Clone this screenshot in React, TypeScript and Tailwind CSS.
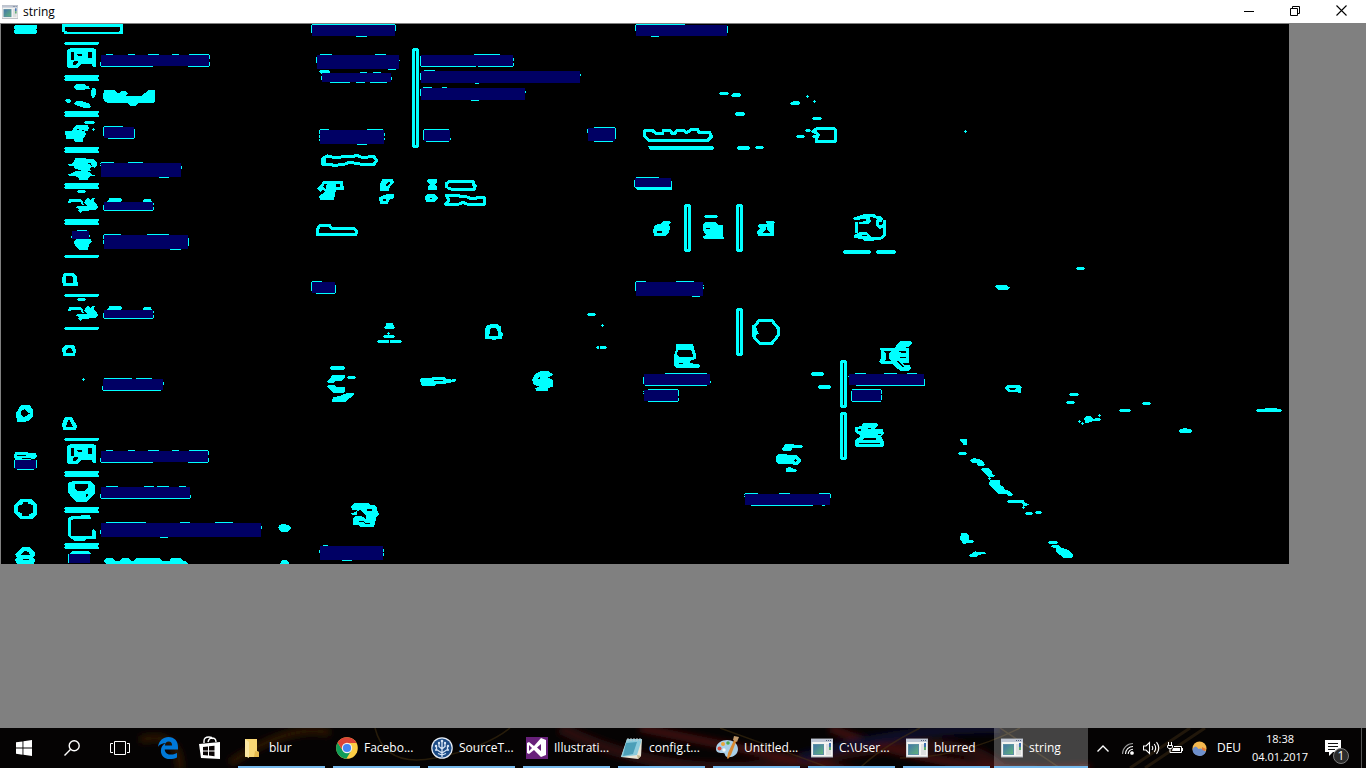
import React from "react";

const CYAN = "#00ffff";
const NAVY = "#000064";

type Span = [number, number];
interface Region {
  at: [number, number, number, number];
  t?: Span[];
  b?: Span[];
  l?: Span[];
  r?: Span[];
}

const regions: Region[] = [
  { at: [101, 55, 108, 11], t: [[106, 113], [128, 135], [148, 159], [172, 179], [189, 209]], b: [[101, 153], [188, 209]], l: [[62, 66]], r: [[55, 59], [62, 66]] },
  { at: [104, 127, 30, 11], t: [[104, 123]], b: [[108, 134]], l: [[127, 136]], r: [[129, 138]] },
  { at: [101, 163, 80, 14], t: [[101, 114], [128, 143]], b: [[159, 169]], l: [[163, 164], [165, 166]], r: [[166, 169]] },
  { at: [104, 202, 49, 8], b: [[104, 153]], l: [[205, 210]], r: [[203, 205], [207, 210]] },
  { at: [104, 235, 84, 14], t: [[104, 121], [147, 169]], b: [[170, 181]], l: [[235, 239], [240, 244]], r: [[238, 246]] },
  { at: [72, 231, 17, 8], t: [[77, 87]], l: [[236, 238]], r: [[235, 237]] },
  { at: [104, 310, 49, 8], b: [[104, 153]], l: [[313, 318]], r: [[311, 313], [315, 318]] },
  { at: [103, 379, 60, 11], t: [[104, 132], [136, 152]], b: [[103, 161]], l: [[386, 390]], r: [[382, 385]] },
  { at: [15, 460, 21, 9], b: [[17, 34]], l: [[460, 468]], r: [[460, 468]] },
  { at: [101, 451, 107, 11], t: [[106, 113], [128, 135], [148, 159], [172, 179], [189, 208]], b: [[101, 153], [188, 208]], l: [[458, 462]], r: [[451, 455], [458, 462]] },
  { at: [101, 487, 89, 11], t: [[106, 118], [144, 154], [157, 169], [179, 186]], b: [[101, 190]], l: [[494, 498]], r: [[495, 498]] },
  { at: [101, 523, 160, 14], t: [[106, 146], [180, 190], [215, 233]], b: [[160, 168]], l: [[530, 534]], r: [[526, 529]] },
  { at: [69, 554, 21, 9], l: [[554, 563]] },
  { at: [312, 25, 83, 11], t: [[312, 395]], b: [[356, 367]], l: [[25, 33]], r: [[25, 31]] },
  { at: [317, 55, 82, 14], t: [[320, 332], [375, 386]], b: [[388, 396]], l: [[57, 63]], r: [[60, 61]] },
  { at: [322, 73, 69, 9], t: [[360, 367], [373, 381]], b: [[330, 350], [356, 365], [370, 387]], l: [[76, 80]], r: [[77, 80]] },
  { at: [421, 55, 92, 11], t: [[474, 500]], b: [[421, 476], [478, 513]], l: [[56, 66]], r: [[58, 61], [63, 66]] },
  { at: [421, 71, 159, 12], t: [[424, 435]], b: [[475, 479]], l: [[73, 80]], r: [[74, 76]] },
  { at: [421, 88, 104, 12], t: [[423, 432], [442, 447]], b: [[471, 479]], l: [[89, 96]], r: [[91, 93]] },
  { at: [320, 130, 64, 14], t: [[320, 329], [367, 383]], b: [[357, 367]], l: [[130, 134], [135, 138], [139, 141]], r: [[133, 136], [138, 140]] },
  { at: [424, 130, 26, 11], t: [[424, 449]], b: [[426, 449]], l: [[130, 140]], r: [[138, 140]] },
  { at: [588, 128, 27, 13], t: [[594, 615]], b: [[594, 613]], l: [[129, 133]], r: [[128, 139]] },
  { at: [636, 25, 91, 11], t: [[636, 685]], b: [[651, 659]], l: [[25, 31]], r: [[26, 33]] },
  { at: [635, 178, 36, 9], t: [[636, 659]], l: [[180, 187]], r: [[181, 187]] },
  { at: [312, 282, 23, 11], t: [[312, 322]], b: [[316, 335]], l: [[282, 291]], r: [[285, 293]] },
  { at: [320, 546, 63, 14], t: [[323, 328]], b: [[342, 352]], l: [[550, 553]], r: [[549, 552], [553, 556]] },
  { at: [636, 282, 67, 14], t: [[636, 646], [676, 694]], b: [[692, 700]], l: [[282, 291]], r: [[285, 286], [287, 289]] },
  { at: [644, 374, 66, 11], t: [[665, 707]], b: [[645, 707]], l: [[377, 384]], r: [[381, 383]] },
  { at: [644, 390, 34, 11], t: [[648, 678]], b: [[648, 678]], l: [[391, 392], [393, 394]], r: [[390, 396], [398, 401]] },
  { at: [849, 374, 75, 11], t: [[855, 866], [884, 897], [907, 917]], b: [[856, 925]], l: [[376, 377]], r: [[379, 385]] },
  { at: [852, 390, 29, 11], t: [[852, 881]], b: [[852, 881]], l: [[391, 401]], r: [[390, 394], [395, 400]] },
  { at: [745, 494, 85, 11], t: [[745, 758], [779, 790], [819, 830]], b: [[751, 813], [822, 825]], l: [[494, 495], [496, 497]], r: [[494, 498]] },
];

function TextRegion({ at: [x, y, w, h], t = [], b = [], l = [], r = [] }: Region) {
  const row = (s: Span[], yy: number) => s.map(([a, z]) => `M${a} ${yy}H${z}v1H${a}z`).join("");
  const col = (s: Span[], xx: number) => s.map(([a, z]) => `M${xx} ${a}V${z}h1V${a}z`).join("");
  return (
    <>
      <rect x={x} y={y} width={w} height={h} fill={NAVY} />
      <path d={row(t, y - 1) + row(b, y + h) + col(l, x - 1) + col(r, x + w)} />
    </>
  );
}

const dash = (x1: number, y1: number, x2: number, y2: number) => {
  const m = Math.round((y1 + y2) / 2);
  return `M${x1 + 3} ${y1}H${x2 - 3}L${x2} ${m}L${x2 - 3} ${y2}H${x1 + 3}L${x1} ${m}z`;
};
const dot = (x: number, y: number) => `M${x - 4} ${y - 1}h9v3h-9zM${x - 1} ${y - 4}h3v3h-3zM${x - 1} ${y + 2}h3v3h-3z`;
const rail = (x: number, y: number, h: number) =>
  `M${x + 1} ${y}h5l1 2v${h - 4}l-1 2h-5l-1 -2v${4 - h}zM${x + 3} ${y + 3}v${h - 6}h1v${6 - h}z`;

const gate =
  "M204 147L213 144H276L287 147V201H278L276 192H243L234 203H204L201 200V150zM213 156V180H222V156zM231 162L234 168H246V162zM264 156V174H276V156zM219 186V194H228L234 189V183H225z";
const bird =
  "M234 0H255L258 4L255 9H234L231 4zM207 27H243L249 36L252 45H246L243 36H214L210 41L204 38zM258 27L264 24L273 33L276 24H284L282 33L288 40L294 52L288 60H270L264 63H246L240 69L234 63L237 57L228 52L231 48H264L252 39zM327 24H363L366 30L363 36H318L327 30zM432 27H453L456 36H429z";

interface Patch {
  x: number;
  y: number;
  fill: string;
  line?: string;
}

// Contours are traced on a grid three times finer than the bitmap.
const patches: Patch[] = [
  {
    x: 0, y: 0,
    fill:
      "M45 75H108L111 78V84L108 88L111 92V98L108 102H45L42 98V92L45 88L42 84V78z" +
      "M186 72H369V99L366 102H192V96L186 95zM195 81V92L201 95H357L360 92V81z" + gate +
      "M228 252H255L258 258H266L270 267H258L252 270H228L222 262z" +
      "M279 263H285L288 270V282L282 293H276L273 285V273z" +
      "M198 297H210L213 302L210 308H200L195 302z" +
      "M228 303H246L270 312L273 321L264 324H252L228 315L222 310z" +
      "M312 270H345L351 279H357L363 273H378L384 280L378 287H426L432 279H438L444 270H465V303L459 309H414L408 318H390L384 309H324L312 303L309 290z" +
      dash(252, 363, 285, 372) +
      "M219 387L228 375H264L267 384L264 393L252 395L258 402L255 408L249 414L250 426H225L222 417H198L195 393H213zM232 386V389H238V386zM246 390V394H252V390z" + dot(279, 388) +
      "M225 474L255 473L258 478H282L291 487V495L284 503L276 500L270 504L273 513L255 516H270L273 522L276 525H284V528H273L264 534V541H240L232 531L222 528H207L204 521H213L228 513H246L225 506L219 497H207L204 491H216L222 486zM260 487L270 494L276 499L272 490z",
  },
  { x: 0, y: 190, fill: bird },
  { x: 0, y: 298, fill: bird },
  {
    x: 0, y: 190,
    fill:
      "M228 147H273L276 156L270 159L264 174L263 180H237L225 168L222 156z" +
      "M192 249H219L231 261L234 288H189L186 267L190 255zM198 258V279H219V264L213 258z" +
      "M195 465H222L228 480L225 498H189L186 474zM198 489H218V483L213 474H204L198 480z" + dot(250, 568),
  },
  { x: 0, y: 396, fill: gate },
  {
    x: 0, y: 370,
    fill:
      "M63 105H90L99 120V138L90 150L72 156H51L48 130zM63 123V132L69 141L78 138L90 130L81 126L75 117z" +
      "M195 141H216L231 168L228 180H189L186 162zM204 150L198 171H219L210 152z" +
      "M45 246H81L84 249H108L111 260L105 267H93V270H45L42 256zM51 255V258H78V255zM66 264V267H93V264z" +
      "M60 387H93L111 405V432L96 447H60L42 426V405zM69 396V402L54 408V426L66 429V438H87V432L100 429V405L84 402V396z" +
      "M66 531H87L105 549V558L100 563L105 570L102 582H51L45 570L51 563L45 552L57 540zM72 543L63 552V555H90L87 546zM69 567V570H87V567z" +
      "M219 333H270L285 345V372L276 378L270 387L258 396H231L219 387L204 366V339zM225 342V357L234 363H252L264 354V342zM258 372V382H261L264 375V372z" +
      "M216 438L270 435L273 447H222L213 450V498H276V480L282 477L288 486V507H258L252 513H222L216 507L204 498V444z" +
      "M219 543H267L273 552L207 553z" +
      "M840 464L852 462L870 468L873 474L864 486H843L834 472z" +
      "M846 570H861L867 579V582H840z" +
      "M312 573L318 564H339L345 573H360L366 564H387L393 573H402L408 564H480L486 573H508L513 564H543L549 573H558L564 582H318z",
  },
  {
    x: 300, y: 20,
    fill:
      "M60 150H87L90 156L87 159H72L63 161L57 156zM63 414H78V434H63z" +
      "M69 484H129L132 510H108L102 540H60L57 528L75 516L72 508L60 516L51 504L63 495zM72 493L69 501L78 510V500L80 492zM108 493V502H120V493z" +
      "M249 476H278L282 486L270 498L267 512H240V490zM262 488L256 496L260 500L270 490V484z" +
      "M264 522H282V534L268 540L264 551H240L237 532L250 526zM249 536V543H258V536z" +
      "M384 477H411V486L405 494L411 500V509H384V500L390 494L381 486z" +
      "M381 522H402L414 534L405 545H378L375 532zM390 533V537H397V533z",
    line:
      "M66 432L70 414L82 408L100 412H120L135 408H150L158 410L170 405L185 412L222 410L230 422L222 433H186L165 430L150 426L135 432L120 434L105 437L90 433H66" +
      "M441 503L440 490L450 483H519L520 494L526 498L522 508H456L441 503" +
      "M438 525H474L482 530L498 530L514 536L530 534L552 531V545L555 552H500L489 547L474 553H437L447 540z" +
      "M52 628V643H168V630L162 626H96L88 616H60z",
  },
  {
    x: 300, y: 270,
    fill:
      "M258 159H279L281 165L285 174L279 177H255L252 171L258 168z" + dot(265, 190) + dash(249, 195, 285, 204) + dash(231, 210, 270, 219) + dash(268, 210, 306, 219) +
      "M573 162H591L603 170V183L609 190L606 207H588L585 210H576L573 207H555V180L558 168zM576 174L570 177V189L567 198H594V186L588 174z" +
      dash(861, 129, 888, 138) + dot(893, 232) + dash(90, 288, 135, 300) +
      "M96 315H135V324L126 332L108 333L99 339H84L81 333L93 324z" + dash(141, 318, 168, 327) +
      "M84 345H105L108 351H135V366L129 369H99L93 360L81 349z" +
      "M99 381L120 378L141 369H162V375L150 384L135 396H96z" +
      "M363 324H396V321H435L438 326L450 327L456 330L459 326H465L468 331L462 336H456L450 340L408 342L405 348H366L360 331zM402 330V333H429V330z" +
      "M723 303H747L750 308L759 312L756 318L744 322L758 329V342L760 350L744 354V362H708L705 354L720 350L702 345L696 329L705 312zM714 324V327H720V321z" +
      "M162 699H204L213 705H222L231 712L230 720L237 732L228 744L225 760L222 771H180L174 765H159V744L168 738H183L168 734H156L153 729L168 726L171 720H156L153 708zM171 723V735L189 741L198 747V735L189 729L183 720zM201 717V723H216V717zM177 753V756H189L195 762H210V759H195L189 753z",
  },
  {
    x: 580, y: 20,
    fill:
      dash(417, 216, 447, 225) + "M459 219H480L483 225L480 231H456L453 225z" + dash(465, 276, 495, 288) +
      "M642 243H657L660 249L657 255H633L630 249z" + dot(682, 229) + dot(703, 244) + dash(696, 291, 726, 300) + dash(648, 345, 675, 354) +
      "M204 378H399L402 384L399 390H210z" + dash(471, 378, 510, 390) + dash(525, 378, 552, 387) +
      dash(675, 327, 693, 336) + "M693 333L704 324V338H697zM696 350L703 344H717V354H699z" + "M165 501H276V507L273 510H171z" +
      "M249 603H270L273 607L267 613L270 625L267 637L255 648H222L219 630L225 615L245 610zM231 633V639H246V633z" +
      dash(372, 585, 414, 594) +
      "M375 606H408L414 615H429V650H432V656H372L369 650L378 644L369 632V612zM378 624V627H390V624z" +
      "M558 603H582L585 608L581 614L582 624V648H534L531 636L540 626L532 618L540 612H560zM549 639H570V636L561 630V622H558V630L549 636z" +
      "M819 594L845 585L858 581H882L888 588H900L909 597L906 606H894L888 594L870 591L873 606L864 612H837V606L858 603V597L822 600z" +
      "M822 645L840 636H861L873 651H885V660L876 663H855L846 657L822 654zM846 645V648H861V645z" +
      dash(789, 690, 873, 702) + dash(888, 690, 948, 702) + dot(1155, 334),
    line:
      "M194 348V332H218L228 341H248L250 331H270L276 340H285L290 332H312L320 338L335 328H352L358 338H390V346L396 348L383 361H206z" +
      "M704 331L712 325H762L766 329V364H708V356L715 345L704 335" +
      "M830 606V640M894 600L892 614L900 622L912 616V648L903 654H884M912 600V618",
  },
  {
    x: 580, y: 260,
    fill:
      "M516 198H528L531 210L537 220L528 226V234H519L516 224z" +
      "M288 252H339L342 264L348 285V297L333 300L330 309L345 312H357L360 318L354 324H288L282 315V288L288 270zM294 270L291 282L297 291H339V285L333 270zM294 309L299 313H309V309z" +
      dash(21, 159, 48, 168) + dot(67, 196) + dash(48, 258, 60, 267) + dash(57, 258, 81, 267) + dash(693, 336, 732, 348) + dash(714, 375, 753, 387) +
      "M960 243H990L996 249L990 258L975 264H987V309H966L975 315H990L993 324L987 333H963L945 321L938 312H906L897 306L903 294V276L900 264H942L948 258zM912 273L918 282V297L912 303H936L927 297V279L936 273zM957 273V276L966 279H978V273zM960 291V294H978V291zM948 302L957 312L966 321L972 320L960 309L954 302z" +
      "M849 489H891L894 495L885 507H909L912 522L904 530L912 546V558L906 561H828L825 555V540L843 528L825 516V501L846 498zM834 507V513H843V507zM864 504V507H873V504zM837 549V552H900V549zM852 534L846 540H888V534zM894 522V526H903V522z" +
      "M615 552H640L645 556H666L669 560L663 564H636V570L630 573H609L603 567L612 561z" +
      "M594 582H621L624 586H651L663 597V606L651 615H639L636 611H594L588 603V588zM642 600L646 608L651 603L648 597z" +
      "M618 624L630 621L651 630L645 636H618z",
    line: "M536 182H576L584 192L595 205V225L584 240L575 250H540L532 242L522 232L520 200L530 192z",
  },
  {
    x: 930, y: 240,
    fill:
      dash(438, 81, 465, 90) +
      "M198 135H228L231 138L240 142L234 150H204L195 138z" +
      "M234 435H267L276 441L273 450V459H267L261 457H237L222 444zM237 444V447L243 450H252L258 447V444z" +
      dash(417, 459, 447, 468) + dash(408, 483, 435, 492) + dash(567, 507, 603, 516) + dash(636, 486, 663, 495) +
      "M978 511L981 507H1005V504H1041V507H1053L1056 511L1053 516H981z" +
      "M750 567H759V564H771V567H783L786 573L783 579H750L747 573z" +
      "M469 528H480L489 536L510 534L512 538L508 543H489L474 549H465L463 535z" + dot(508, 526) + dot(449, 544) + dot(457, 550) +
      "M87 600L90 597H111V616H102L96 608z" + dash(84, 636, 111, 645) +
      "M120 660L132 654L156 660L165 674L159 678H144L141 669H126z" +
      "M153 687L158 684H174L186 693V702L195 706L189 711H174z" + dot(178, 715) +
      "M180 720H210V735L222 741V748L240 753L250 764L240 770L228 762H207L177 735z" +
      "M231 784L234 780H282L285 789L297 793L291 797H279L276 789H234z" + dot(279, 802) + dash(285, 816, 309, 825) + dash(315, 813, 336, 822) +
      "M93 879H108L117 888V900H129L132 905L126 909H114L100 912L90 897z" +
      "M135 934L147 936H165L168 941L144 945L138 951H120L117 946z" + dash(354, 903, 384, 912) +
      "M363 918L366 915H387L390 921L414 930L431 945L426 954H402L378 936V924L366 922z",
  },
];

const thinBars = [42, 255, 294, 327, 438];
const thickBars = [75, 111, 147, 183, 219, 471, 507, 543];
const rails: [number, number, number][] = [[412, 48, 100], [684, 204, 48], [736, 204, 48], [736, 308, 48], [840, 360, 48], [840, 412, 48]];

function EdgeMap() {
  return (
    <svg width="1288" height="540" viewBox="1 24 1288 540" shapeRendering="crispEdges" fill={CYAN} fillRule="evenodd" className="block shrink-0 bg-black" role="img" aria-label="Detected regions">
      {thinBars.map((y) => (
        <path key={y} d={`M65 ${y}h33l1 1-1 2H65l-1-2z`} />
      ))}
      {thickBars.map((y) => (
        <path key={y} d={`M65 ${y}h33l1 1-1 2 1 2-1 1H65l-1-1 1-2-1-2z`} />
      ))}
      <path d={rails.map((r) => rail(...r)).join("")} />
      {patches.map((p, i) => (
        <g key={i} transform={`translate(${p.x} ${p.y}) scale(${1 / 3})`}>
          <path d={p.fill} />
          {p.line && <path d={p.line} fill="none" stroke={CYAN} strokeWidth="9" strokeLinejoin="round" />}
        </g>
      ))}
      {regions.map((r, i) => (
        <TextRegion key={i} {...r} />
      ))}
    </svg>
  );
}

function WindowIcon({ size }: { size: number }) {
  return (
    <svg width={size} height={size} viewBox="0 0 22 22" className="shrink-0">
      <rect x="0" y="2" width="22" height="18" fill="#f4f4f2" stroke="#a9adb5" strokeWidth="1" />
      <path d="M0 2h22v3H0z" fill="#bfc6d4" />
      <path d="M15 3h1v1h-1zM17 3h1v1h-1zM19 3h1v1h-1z" fill="#51617c" />
      <rect x="2" y="7" width="11" height="11" fill="#5b8fa3" />
      <path d="M3 8h9v9H3z" fill="url(#wi)" />
      <path d="M15 7h5v11h-5z" fill="#dcdedf" />
      <path d="M18 6h2v4h-2z" fill="#3c6fb0" />
      <path d="M18 10h2v3h-2z" fill="#58ab6d" />
      <defs>
        <linearGradient id="wi" x1="0" y1="0" x2="1" y2="1">
          <stop offset="0" stopColor="#4577a8" />
          <stop offset="1" stopColor="#5fb27b" />
        </linearGradient>
      </defs>
    </svg>
  );
}

const FolderIcon = () => (
  <svg width="22" height="22" viewBox="0 0 22 22" className="shrink-0">
    <path d="M4 2h12v12l2 1v5H4z" fill="#f8d775" />
    <path d="M4 2l4 3v16l-4-2z" fill="#fbe7a4" />
    <path d="M14 14l4 1v5h-5z" fill="#e5b94e" />
  </svg>
);

const ChromeIcon = () => (
  <svg width="22" height="22" viewBox="0 0 22 22" className="shrink-0">
    <circle cx="11" cy="11" r="10.8" fill="#fccd44" />
    <path d="M11 11L1.6 5.6A10.8 10.8 0 0 1 20.5 6H11z" fill="#db4437" />
    <path d="M1.6 5.6A10.8 10.8 0 0 0 10.3 21.8L15.3 13.5 6.7 13.5z" fill="#0f9d58" />
    <path d="M1.6 5.6L6.7 13.5 11 11 11 6z" fill="#db4437" />
    <circle cx="11" cy="11" r="5.2" fill="#f1f1f1" />
    <circle cx="11" cy="11" r="4.1" fill="#4285f4" />
  </svg>
);

const SourceTreeIcon = () => (
  <svg width="22" height="22" viewBox="0 0 22 22" className="shrink-0">
    <circle cx="11" cy="11" r="10.8" fill="#e8eef7" />
    <circle cx="11" cy="11" r="9.6" fill="#1d4c86" />
    <path d="M11 20V4M11 16L5.5 12.5V9M11 16l5.5-3.5V9M11 12L8 9.5V6M11 12l3-2.5V6M11 18l-4-1.5M11 18l4-1.5" stroke="#d6e4f5" strokeWidth="1.3" fill="none" />
    <g fill="#d6e4f5">
      <circle cx="11" cy="4" r="1.3" />
      <circle cx="8" cy="6" r="1.2" />
      <circle cx="14" cy="6" r="1.2" />
      <circle cx="5" cy="9" r="1.2" />
      <circle cx="17" cy="9" r="1.2" />
      <circle cx="5" cy="13" r="1" />
      <circle cx="17" cy="13" r="1" />
    </g>
  </svg>
);

const VisualStudioIcon = () => (
  <svg width="22" height="22" viewBox="0 0 22 22" className="shrink-0">
    <path d="M0 0h22v22H0z" fill="#68217a" />
    <path fillRule="evenodd" d="M15 1l5 2v15l-5 2-7-7-5 4-2-1V6l2-1 5 4zM15 7l-4 3.500 4 3.500zM3 8v6l3-3z" fill="#fff" />
  </svg>
);

const NotepadIcon = () => (
  <svg width="22" height="22" viewBox="0 0 22 22" className="shrink-0">
    <path d="M6 2h15l-1 17-3 3-17-2z" fill="#e9e4d4" />
    <path d="M6 2h15l-5 16-16 2z" fill="#8ccbdc" />
    <path d="M5 6l11-1-4 12-10 2z" fill="#4c9fb8" />
    <path d="M7 1v3M10 1v3M13 1v3M16 1v3M19 1v3" stroke="#c4ced2" />
    <path d="M16 18l4 1-3 3z" fill="#c3b68f" />
  </svg>
);

const PaintIcon = () => (
  <svg width="24" height="24" viewBox="0 0 24 24" className="shrink-0">
    <path d="M1 13C1 7 7 4 12 4s11 3 11 9-6 9-11 8c-3-1-1-4-4-4s-7 0-7-4z" fill="#a9cfe8" />
    <circle cx="4.500" cy="12.500" r="2" fill="#d84a3a" />
    <circle cx="8" cy="8" r="2" fill="#e9a53a" />
    <circle cx="13" cy="7" r="1.800" fill="#4ba84f" />
    <circle cx="9" cy="14" r="1.700" fill="#f5fafc" />
    <path d="M20 2l2 1-6 16-3 4-1-1 1-5z" fill="#d98a34" />
    <path d="M19 0l5 1-2 5-4-2z" fill="#c29a6c" />
  </svg>
);

const apps: { label: string; icon: React.ReactNode; active?: boolean }[] = [
  { label: "blur", icon: <FolderIcon /> },
  { label: "Facebo...", icon: <ChromeIcon /> },
  { label: "SourceT...", icon: <SourceTreeIcon /> },
  { label: "Illustrati...", icon: <VisualStudioIcon /> },
  { label: "config.t...", icon: <NotepadIcon /> },
  { label: "Untitled...", icon: <PaintIcon /> },
  { label: "C:\\User...", icon: <WindowIcon size={22} /> },
  { label: "blurred", icon: <WindowIcon size={22} /> },
  { label: "string", icon: <WindowIcon size={22} />, active: true },
];

function Wallpaper() {
  return (
    <svg className="absolute inset-0 h-full w-full" viewBox="0 0 1366 40" preserveAspectRatio="none" fill="none">
      <defs>
        <filter id="soft">
          <feGaussianBlur stdDeviation="3" />
        </filter>
      </defs>
      <g filter="url(#soft)">
        <path d="M140 12q40-10 40 30M230 35q60-40 100-30" stroke="#2c1204" strokeWidth="8" />
        <path d="M560 0q120 60 260 30T1000 40" stroke="#2b0a0c" strokeWidth="12" />
        <path d="M640 0l220 45M830 0q120 50 260 40" stroke="#40100e" strokeWidth="8" />
        <path d="M800 30q100-30 200-30" stroke="#0c0c2a" strokeWidth="10" />
      </g>
      <path d="M375 0q10 40 60 30T510 0M720 0l110 40M860 40q20-20 60-40M1000 0l60 40M900 30q60 0 120-30" stroke="#4a3512" strokeWidth="1.500" opacity=".5" />
      <path d="M1130 40l60-40M1145 40l60-40" stroke="#342510" strokeWidth="3" opacity=".6" />
    </svg>
  );
}

const launcher = "flex h-full w-12 items-center justify-center";

function Taskbar() {
  return (
    <footer className="relative h-10 shrink-0 bg-[#050303] text-xs text-white">
      <Wallpaper />
      <div className="relative flex h-full items-stretch">
        <button aria-label="Start" className={launcher}>
          <svg width="16" height="16" viewBox="0 0 16 16" fill="#fff">
            <path d="M0 2.300L6.500 1.400V7.600H0zM7.400 1.300L16 0V7.600H7.400zM0 8.500H6.500V14.700L0 13.800zM7.400 8.500H16V16L7.400 14.800z" />
          </svg>
        </button>
        <button aria-label="Search" className={launcher}>
          <svg width="16" height="16" viewBox="0 0 16 16" fill="none" stroke="#fff" strokeWidth="1.400">
            <circle cx="10.200" cy="5.700" r="5" />
            <path d="M6.700 9.300L.5 15.500" />
          </svg>
        </button>
        <button aria-label="Task view" className={launcher}>
          <svg width="20" height="14" viewBox="0 0 20 14" fill="none" stroke="#fff">
            <path d="M4.500.5h11v13h-11zM3 2.500H.5v9H3M17 2.500h2.500v9H17" />
          </svg>
        </button>
        <button aria-label="Edge" className={launcher}>
          <svg width="20" height="22" viewBox="0 0 20 22" fill="#0078d7">
            <path d="M0 9.800C1 3.500 5.200 0 10.400 0 16.500 0 20 4.300 20 10v2.400H6.700c.2 3.600 3.300 5.200 6.600 5.200 2.300 0 4.200-.6 5.700-1.500v4.400c-2 1-4.500 1.500-7.100 1.500-5.700 0-9-3.400-9-8.300 0-3.300 1.700-6.100 4.700-7.700C5 6.200 2 7 0 9.800zM6.900 8.600h7.200c0-2.700-1.300-4-3.400-4-2.200 0-3.500 1.600-3.800 4z" />
          </svg>
        </button>
        <button aria-label="Store" className="flex h-full w-9 items-center justify-center">
          <svg width="22" height="24" viewBox="0 0 22 24">
            <path d="M5 7V5q0-4 5-4 3 0 4 2M9 6q1-4 4-4 4 0 4 4" fill="none" stroke="#fff" strokeWidth="1.400" />
            <path d="M0 8l21-2v17L2 22z" fill="#fff" />
            <path d="M4 11l5-.6v4H4zM10 10.300l5.500-.6v4.700H10zM4 15.400h5v4L4 19zM10 15.400h5.500v4.800l-5.500-.6z" fill="#0a0505" />
          </svg>
        </button>
        <nav aria-label="Open windows" className="ml-[10px] flex gap-2">
          {apps.map((a) => (
            <button
              key={a.label}
              className={
                a.active
                  ? "-ml-1 flex w-[94px] items-center gap-[3px] border-b-2 border-[#76b9ed] bg-white/25 pt-px pl-1"
                  : "flex w-[87px] items-center gap-[3px] border-b-2 border-[#76b9ed] pt-px"
              }
            >
              <span className="flex w-7 shrink-0 justify-center">{a.icon}</span>
              <span className="whitespace-nowrap">{a.label}</span>
            </button>
          ))}
        </nav>
        <div className="ml-auto flex items-center">
          <button aria-label="Show hidden icons" className="flex w-6 justify-center">
            <svg width="12" height="7" viewBox="0 0 12 7" fill="none" stroke="#fff" strokeWidth="1.400">
              <path d="M.5 6.500L6 1l5.500 5.500" />
            </svg>
          </button>
          <button aria-label="Network" className="flex w-6 justify-center">
            <svg width="13" height="13" viewBox="0 0 13 13" fill="none" stroke="#fff" strokeWidth="1.100">
              <path d="M1.500 12A10.500 10.500 0 0 1 12 1.500" stroke="#999" />
              <path d="M4.500 12A7.500 7.500 0 0 1 12 4.500M7.200 12A4.800 4.800 0 0 1 12 7.200" />
              <circle cx="11" cy="11" r="1.300" fill="#fff" />
            </svg>
          </button>
          <button aria-label="Volume" className="flex w-6 justify-center">
            <svg width="17" height="14" viewBox="0 0 17 14" fill="none" stroke="#fff" strokeWidth="1.100">
              <path d="M.5 5v4H3l3.500 3.500v-11L3 5zM9 5q1.500 2 0 4M11.200 3q3 4 0 8M13.500 1.200q4.500 5.800 0 11.600" />
            </svg>
          </button>
          <button aria-label="Battery" className="flex w-6 justify-center">
            <svg width="16" height="13" viewBox="0 0 16 13" fill="none" stroke="#fff">
              <path d="M1.500 0v3M4.500 0v3M.5 3.500h5v2l-1.500 1h-2L.5 5.500zM3 6.500v4h11.500v-6H7M15.500 6v3" />
              <path d="M6 6h7v3H5z" fill="#fff" stroke="none" />
            </svg>
          </button>
          <button aria-label="Weather" className="flex w-6 justify-center">
            <svg width="15" height="15" viewBox="0 0 15 15">
              <circle cx="7.500" cy="7.500" r="7" fill="#f5b94f" />
              <path d="M.5 8q3-5 6 0 3-2 7.500 2.500A7 7 0 0 1 .5 8z" fill="#6f90cc" />
              <path d="M10 6l4 2-1 2-3-1z" fill="#e2783a" />
            </svg>
          </button>
          <button className="w-9 text-center">DEU</button>
          <button className="w-[66px] text-center text-[11px] leading-[18px] whitespace-nowrap">
            18:38
            <br />
            04.01.2017
          </button>
          <button aria-label="Notifications" className="relative ml-[11px] flex h-10 w-8 items-center">
            <svg width="26" height="32" viewBox="0 0 26 32">
              <path d="M1 8h16v12H9l-4 4v-4H1z" fill="#fff" />
              <path d="M4 11.500h10M4 14.500h10M4 17.500h7" stroke="#111" />
              <circle cx="17" cy="24" r="7.500" fill="#2b2b2b" stroke="#7c7c7c" />
            </svg>
            <span className="absolute top-[19px] left-[13px] w-2 text-center leading-[18px]">1</span>
          </button>
          <span className="ml-[5px] h-10 w-[5px] border-l border-[#555]" />
        </div>
      </div>
    </footer>
  );
}

const caption = "flex h-full w-[46px] items-center justify-center";

export default function App() {
  return (
    <div className="flex min-h-screen flex-col overflow-hidden bg-[#808080] font-['Open_Sans','Noto_Sans',sans-serif]">
      <header className="flex h-[23px] shrink-0 items-center bg-white pr-[2px] pl-[2px]">
        <WindowIcon size={16} />
        <h1 className="ml-[5px] text-xs text-black">string</h1>
        <div className="ml-auto flex h-full pb-[2px]">
          <button aria-label="Minimize" className={caption}>
            <svg width="10" height="10" stroke="#000">
              <path d="M0 5.500h10" />
            </svg>
          </button>
          <button aria-label="Restore" className={caption}>
            <svg width="10" height="10" fill="none" stroke="#000">
              <path d="M.5 2.500h7v7h-7zM2.500 2.500v-2h7v7h-2" />
            </svg>
          </button>
          <button aria-label="Close" className={caption}>
            <svg width="11" height="11" stroke="#000" strokeWidth="1.100">
              <path d="M.5.5l10 10M10.500.5l-10 10" />
            </svg>
          </button>
        </div>
      </header>
      <main className="flex-1 pt-px pl-px">
        <EdgeMap />
      </main>
      <Taskbar />
    </div>
  );
}
